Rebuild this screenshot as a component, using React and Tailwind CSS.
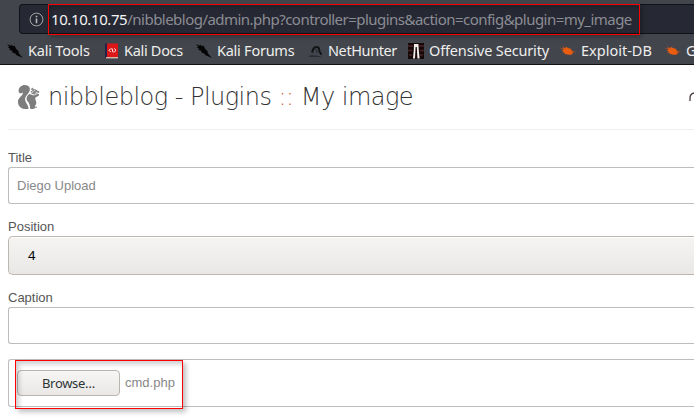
import React from 'react';

function KaliIcon() {
  return (
    <svg viewBox="0 0 16 16" className="h-4 w-4 shrink-0">
      <path d="M0 1.2 4 2.8 3.8 1.2 6 3.2 7.6 2.6 9 5.8 11.6 8.2 11.6 10 15.8 15 12 13.2 9.6 12.2 8.2 10.4 5.4 9.4 5.2 7.8 2.2 7 3.4 5.8 .6 4.4 2.4 4Z" fill="#050505" />
    </svg>
  );
}

function DocsIcon() {
  return (
    <svg viewBox="0 0 14 16" className="h-4 w-3.5 shrink-0">
      <path d="M0 .5h3V15H0z" fill="#252448" />
      <path d="M2 .5h11V14H2z" fill="#dd1717" />
      <path d="M1 14h12v1.4H1z" fill="#d5b6ae" />
      <path d="M5.8 5.5 4 7.3l1.8 1.8M9.2 5.5 11 7.3 9.2 9.1M6.8 5.2l1.4 4.2" fill="none" stroke="#fff" strokeWidth="1" />
    </svg>
  );
}

function HunterIcon() {
  return (
    <svg viewBox="0 0 15 16" className="h-4 w-[15px] shrink-0">
      <path d="M4.2 9.6C4.7 6 6.2 4 8.6 4c2.2 0 2.6 1.4 2.5 2.8-.1 1.8 1 3.2 2.4 4.8" fill="none" stroke="#121416" strokeWidth="2" />
      <path d="M6.6 6C8.2 6 9 7.5 9.2 9.8" fill="none" stroke="#24272b" strokeWidth="1" />
      <path d="M0 13.8c3-2.2 5-1.8 7.3-1.2s4.5.3 7 1.8c-5-.5-9-.7-14.3-.6Z" fill="#24272b" />
    </svg>
  );
}

function SecurityIcon() {
  return (
    <svg viewBox="0 0 16 16" className="h-4 w-4 shrink-0">
      <path d="M0 0h16v16H0z" fill="#160708" />
      <path d="M0 3h5M11 3h5M0 7.5h4M12 7.5h4M1 12h3M12 12h3" stroke="#4a2527" strokeWidth="1.5" />
      <path d="M6 1h4.4l.4 6 .8 8.6H9.4L8.8 4H7.6L7 15.6H5L5.8 7Z" fill="#f1eded" />
    </svg>
  );
}

function ExploitIcon() {
  return (
    <svg viewBox="0 0 16 16" className="h-4 w-4 shrink-0">
      <path d="m2.5 4.6 2.7.7 1-1.5 2 1.5 2.2.2 1.6 2.3 2.6 1.2-2.2.2.6 1.9-1.8-.4.4 1.5-2.2-.8-1.6.7-1-1-2.1.3.2-1.5-2.4-.4 1.2-1.3L1.6 7.3l2-.7Z" fill="#ea5d10" />
      <path d="m.5 5.2 3.4 1M2.6 3.4l3 2.4M11 8l4.4 1" stroke="#b95022" strokeWidth=".7" />
    </svg>
  );
}

function Squirrel() {
  return (
    <svg viewBox="0 0 23 26" className="h-[26px] w-[23px] shrink-0">
      <path d="M11.6 24.8C5.6 26 1.3 22.8 1 18.4c-.3-3.8 2.8-5.3 4.4-7.8.5-.8.5-1.6.1-2.2C4.2 10 1.5 9.4 1.6 7 1.6 3.4 4.4 1 7.8 1c3.8 0 6 2.8 4.8 6-1.1 2.9-4.5 5-4.5 8.3 0 3.3 3.3 5.4 3.5 9.5Z" fill="#7d7d7d" />
      <path d="M12.8 9.8c1.7 1.3 3.8 2 5.3 1.2l2.6-1.3c1.4-.1 1.6 1.4.9 2.1l-3.2 1.8c-.3 1.2 0 2.1.5 3.2.9 1.9.3 4.2-1.2 5.5.8.3 1 1.2.3 1.9-.8.7-3.2.9-5 .6.5-3-.8-5.6-2.5-7.6-1.8-2.5-.7-5.7 2.3-7.4Z" fill="#7d7d7d" />
      <path d="m13.6 3.8 1.1 1 1.1-1.4.8 1.9c1.8-.1 3.2.5 4.4 1.6l1.3.4c.4 1.1-.5 1.8-1.6 1.9l-2.3 1c-2 .6-3.8-.2-4.5-1.8-.4-1 .1-1.6.6-2.2Z" fill="#858585" />
      <path d="m13.6 6.8 1.8-.5m-.8 2.2 1.8-.9m1-1.4.8 1m.2 2 2.1-.8" stroke="#fff" strokeWidth=".9" />
      <circle cx="19" cy="23.2" r=".8" fill="#7d7d7d" />
    </svg>
  );
}

function Bookmark({ icon, className, children }) {
  return (
    <div className={`flex shrink-0 items-center ${className}`}>
      {icon}
      <span className="ml-[5px] whitespace-nowrap">{children}</span>
    </div>
  );
}

const field = 'ml-2 flex items-center rounded-l-[3px] border border-r-0 border-[#bdbdbd] bg-white pl-2 text-[#888]';
const label = 'ml-2 flex h-4 items-center leading-4 text-[#555]';

export default function App() {
  return (
    <div className="relative h-[419px] w-[694px] overflow-hidden bg-white font-['Liberation_Sans',sans-serif] text-[13px]">
      <header className="h-[65px] border-b border-[#111216] bg-[#42454c] pt-1 font-['Noto_Sans',sans-serif] text-[#eeeeec]">
        <div className="ml-[19px] flex h-[30px] items-center rounded-l border border-r-0 border-[#111217] bg-[#262833] pl-[9px]">
          <svg viewBox="0 0 15 15" className="h-[15px] w-[15px] shrink-0">
            <circle cx="7.5" cy="7.5" r="6.4" fill="none" stroke="#a5a6aa" strokeWidth="1" />
            <path d="M7.5 6.5v4.7M7.5 3.7v1.5" stroke="#b8b9bd" strokeWidth="1.6" />
          </svg>
          <span className="ml-[7px] whitespace-nowrap text-[15px] text-[#8b8d94]">
            <span className="tracking-[-0.4px] text-[#f4f4f5]">10.10.10.75</span><span className="tracking-[-0.53px]">/nibbleblog/admin.php?controller=plugins&amp;action=config&amp;plugin=my_image</span>
          </span>
        </div>
        <nav className="ml-[7px] flex h-[30px] items-center pt-[3px] text-[14.5px]">
          <Bookmark icon={<KaliIcon />} className="w-[98px] tracking-[-0.2px]">Kali Tools</Bookmark>
          <Bookmark icon={<DocsIcon />} className="w-[91px] tracking-[-0.3px]">Kali Docs</Bookmark>
          <Bookmark icon={<KaliIcon />} className="w-[112px] tracking-[-0.25px]">Kali Forums</Bookmark>
          <Bookmark icon={<HunterIcon />} className="w-[100px] tracking-[-0.4px]">NetHunter</Bookmark>
          <Bookmark icon={<SecurityIcon />} className="w-[152px] tracking-[-0.16px]">Offensive Security</Bookmark>
          <Bookmark icon={<ExploitIcon />} className="w-[105px] tracking-[0px]">Exploit-DB</Bookmark>
          <Bookmark icon={<ExploitIcon />} className="w-[105px]">G</Bookmark>
        </nav>
      </header>

      <div className="ml-2 flex h-[65px] items-center border-b border-[#eeeeee] pl-[9px]">
        <Squirrel />
        <h1 className="ml-2 whitespace-nowrap font-['DejaVu_Sans'] text-[24px] font-extralight tracking-[-0.52px] text-[#333]">
          nibbleblog - Plugins <span className="text-[#c95f28]">::</span> My image
        </h1>
        <svg viewBox="0 0 5 10" className="ml-auto h-[10px] w-[5px]">
          <path d="M1 9V6Q1 2 5 1" fill="none" stroke="#493d3b" strokeWidth="1.3" />
        </svg>
      </div>

      <form className="pt-5">
        <label className={label}>Title</label>
        <div className={`${field} mt-px h-[37px]`}>Diego Upload</div>
        <label className={`${label} mt-[15px]`}>Position</label>
        <div className="ml-2 mt-px flex h-[39px] items-center rounded-l-[5px] border border-r-0 border-[#bdb7b1] bg-linear-to-b from-[#f5f4f3] to-[#e9e8e7] pl-[19px] font-['Noto_Sans'] text-black shadow-[inset_0_1px_0_white]">4</div>
        <label className={`${label} mt-[15px]`}>Caption</label>
        <div className={`${field} mt-px h-[37px]`} />
        <div className={`${field} mt-[15px] h-[48px]`}>
          <button type="button" className="h-[26px] w-[103px] rounded-[4px] border border-[#bbb5af] bg-linear-to-b from-[#f7f6f5] to-[#e9e8e7] pt-px font-['Noto_Sans'] text-[13px] tracking-[-0.3px] text-[#2e3436]">Browse…</button>
          <span className="ml-[5px]">cmd.php</span>
        </div>
      </form>
      <div className="absolute left-[48px] top-1 h-[31px] w-[592px] border border-[#f00] shadow-[2px_2px_4px_rgba(0,0,0,0.25),inset_2px_2px_4px_rgba(0,0,0,0.2)]" />
      <div className="absolute left-[15px] top-[360px] h-[49px] w-[168px] border border-[#f00] shadow-[3px_3px_5px_rgba(0,0,0,0.25),inset_3px_3px_5px_rgba(0,0,0,0.2)]" />
    </div>
  );
}
